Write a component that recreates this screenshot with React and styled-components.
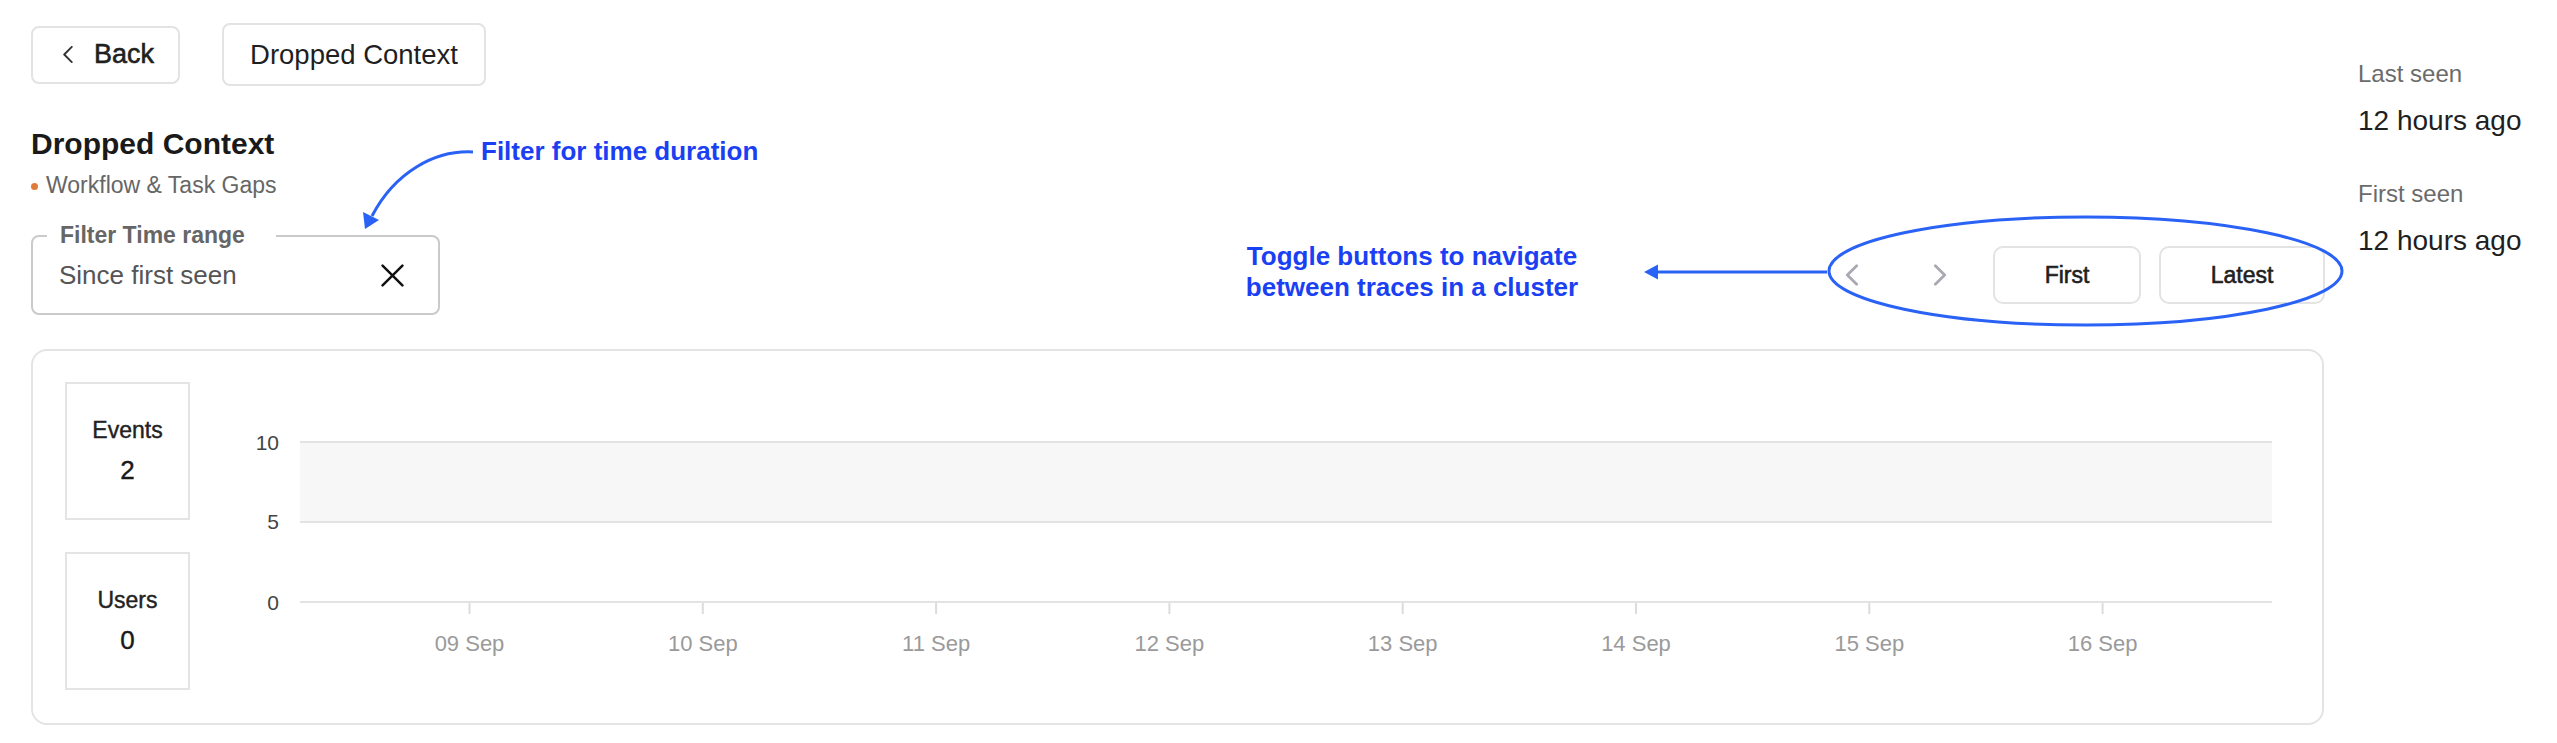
import React from "react";
import styled, { createGlobalStyle } from "styled-components";

const GlobalStyle = createGlobalStyle`
  html, body { margin: 0; padding: 0; background: #fff; }
  body { font-family: "Liberation Sans", Arial, sans-serif; color: #1f1f1f; }
  * { box-sizing: border-box; }
`;

const Page = styled.div`
  display: flex;
  align-items: flex-start;
  width: 2557px;
`;

const Main = styled.div`
  position: relative;
  flex: 0 0 2325px;
  padding: 23px 0 0 31px;
`;

const TopBar = styled.div`
  display: flex;
  align-items: center;
  gap: 42px;
  height: 63px;
`;

// $medium fakes a medium weight on top of the regular face
const OutlineButton = styled.button`
  display: flex;
  align-items: center;
  justify-content: ${(p) => (p.$start ? "flex-start" : "center")};
  gap: 20px;
  width: ${(p) => p.$w}px;
  height: ${(p) => p.$h}px;
  padding: ${(p) => (p.$start ? "0 0 0 29px" : "0")};
  background: #fff;
  border: 2px solid #e3e3e3;
  border-radius: ${(p) => p.$r || 8}px;
  font-family: "Liberation Sans", Arial, sans-serif;
  font-size: ${(p) => p.$fs}px;
  font-weight: 400;
  -webkit-text-stroke: ${(p) => (p.$medium ? "0.6px #1f1f1f" : "0")};
  color: #1f1f1f;
  cursor: pointer;
`;

const Title = styled.h1`
  margin: 40px 0 0;
  font-size: 30px;
  line-height: 36px;
  font-weight: 700;
  color: #1a1a1a;
`;

const Category = styled.div`
  display: flex;
  align-items: center;
  gap: 8px;
  margin-top: 9px;
  font-size: 23px;
  line-height: 28px;
  color: #666;
`;

const Dot = styled.span`
  width: 7px;
  height: 7px;
  border-radius: 50%;
  background: #e07b39;
  margin-top: 2px;
`;

const FilterRow = styled.div`
  display: flex;
  align-items: center;
  justify-content: space-between;
  margin-top: 36px;
  height: 80px;
`;

const FilterBox = styled.div`
  position: relative;
  display: flex;
  align-items: center;
  justify-content: space-between;
  width: 409px;
  height: 80px;
  padding: 0 34px 0 26px;
  border: 2px solid #cacaca;
  border-radius: 8px;
`;

const FilterLegend = styled.span`
  position: absolute;
  top: -16px;
  left: 14px;
  padding: 0 31px 0 13px;
  background: #fff;
  font-size: 23px;
  line-height: 28px;
  font-weight: 700;
  color: #666;
`;

const FilterValue = styled.span`
  font-size: 26px;
  color: #555;
`;

const NavGroup = styled.div`
  display: flex;
  align-items: center;
  gap: 18px;
`;

const IconButton = styled.button`
  display: flex;
  align-items: center;
  justify-content: center;
  width: 70px;
  height: 58px;
  padding: 0;
  background: none;
  border: none;
  cursor: pointer;
`;

const Card = styled.section`
  display: flex;
  gap: 40px;
  margin-top: 34px;
  width: 2293px;
  height: 376px;
  padding: 31px 50px 0 32px;
  border: 2px solid #e4e4e4;
  border-radius: 16px;
`;

const StatColumn = styled.div`
  display: flex;
  flex-direction: column;
  gap: 32px;
  width: 125px;
  flex-shrink: 0;
`;

const StatBox = styled.div`
  display: flex;
  flex-direction: column;
  align-items: center;
  justify-content: center;
  gap: 12px;
  height: 138px;
  border: 2px solid #e4e4e4;
`;

const StatLabel = styled.div`
  font-size: 23px;
  line-height: 26px;
  color: #222;
  -webkit-text-stroke: 0.4px #222;
`;

const StatValue = styled.div`
  font-size: 26px;
  line-height: 30px;
  color: #1a1a1a;
  -webkit-text-stroke: 0.4px #1a1a1a;
`;

const Side = styled.aside`
  display: flex;
  flex-direction: column;
  gap: 40px;
  padding: 59px 0 0 33px;
`;

const Meta = styled.div`
  display: flex;
  flex-direction: column;
  gap: 14px;
`;

const MetaLabel = styled.div`
  font-size: 24px;
  line-height: 30px;
  color: #6b6b6b;
`;

const MetaValue = styled.div`
  font-size: 28px;
  line-height: 36px;
  color: #1f1f1f;
  white-space: nowrap;
`;

/* annotation overlays drawn on top of the screenshot */
const Note = styled.div`
  position: absolute;
  left: ${(p) => p.$x}px;
  top: ${(p) => p.$y}px;
  width: ${(p) => p.$w}px;
  font-family: "Liberation Sans", Arial, sans-serif;
  font-size: 26px;
  line-height: 31px;
  font-weight: 700;
  color: #1b3ff2;
  text-align: ${(p) => p.$align || "center"};
  white-space: nowrap;
`;

const Mark = styled.svg`
  position: absolute;
  left: ${(p) => p.$x}px;
  top: ${(p) => p.$y}px;
  overflow: visible;
  pointer-events: none;
`;

const ChevronLeft = ({ color = "#333", w = 12, h = 17, sw = 2 }) => (
  <svg width={w} height={h} viewBox="0 0 12 18" fill="none">
    <polyline points="10,1 2,9 10,17" stroke={color} strokeWidth={sw} strokeLinecap="round" strokeLinejoin="round" />
  </svg>
);

const ChevronRight = ({ color = "#333", w = 12, h = 17, sw = 2 }) => (
  <svg width={w} height={h} viewBox="0 0 12 18" fill="none">
    <polyline points="2,1 10,9 2,17" stroke={color} strokeWidth={sw} strokeLinecap="round" strokeLinejoin="round" />
  </svg>
);

const CloseIcon = () => (
  <svg width="23" height="23" viewBox="0 0 22 22" fill="none">
    <path d="M1.5 1.5 L20.5 20.5 M20.5 1.5 L1.5 20.5" stroke="#111" strokeWidth="2.4" strokeLinecap="round" />
  </svg>
);

const dates = ["09 Sep", "10 Sep", "11 Sep", "12 Sep", "13 Sep", "14 Sep", "15 Sep", "16 Sep"];

const Chart = () => {
  const W = 2042;
  const left = 70;
  return (
    <svg width={W} height={309} style={{ flexShrink: 0 }}>
      <rect x={left} y={60} width={W - left} height={80} fill="#f7f7f7" />
      {[60, 140, 220].map((y) => (
        <line key={y} x1={left} x2={W} y1={y} y2={y} stroke="#e3e3e3" strokeWidth="2" />
      ))}
      <g fontFamily="Liberation Sans, Arial, sans-serif" fontSize="21" fill="#444" textAnchor="end">
        <text x="49" y="68">10</text>
        <text x="49" y="147">5</text>
        <text x="49" y="228">0</text>
      </g>
      {dates.map((d, i) => {
        const x = 239.5 + i * 233.3;
        return (
          <g key={d}>
            <line x1={x} x2={x} y1={221} y2={232} stroke="#dcdcdc" strokeWidth="2" />
            <text x={x} y="269" textAnchor="middle" fontFamily="Liberation Sans, Arial, sans-serif" fontSize="22" fill="#9a9a9a">
              {d}
            </text>
          </g>
        );
      })}
    </svg>
  );
};

export default function App() {
  return (
    <>
      <GlobalStyle />
      <Page>
        <Main>
          <TopBar>
            <OutlineButton $w={149} $h={58} $fs={27} $medium $start>
              <ChevronLeft />
              Back
            </OutlineButton>
            <OutlineButton $w={264} $h={63} $fs={27.5}>
              Dropped Context
            </OutlineButton>
          </TopBar>

          <Title>Dropped Context</Title>
          <Category>
            <Dot />
            Workflow &amp; Task Gaps
          </Category>

          <FilterRow>
            <FilterBox>
              <FilterLegend>Filter Time range</FilterLegend>
              <FilterValue>Since first seen</FilterValue>
              <CloseIcon />
            </FilterBox>
            <NavGroup>
              <IconButton>
                <ChevronLeft color="#a9a9b3" w={14} h={22} sw={2.4} />
              </IconButton>
              <IconButton>
                <ChevronRight color="#a9a9b3" w={14} h={22} sw={2.4} />
              </IconButton>
              <OutlineButton $w={148} $h={58} $fs={23} $medium $r={10}>
                First
              </OutlineButton>
              <OutlineButton $w={166} $h={58} $fs={23} $medium $r={10}>
                Latest
              </OutlineButton>
            </NavGroup>
          </FilterRow>

          <Card>
            <StatColumn>
              <StatBox>
                <StatLabel>Events</StatLabel>
                <StatValue>2</StatValue>
              </StatBox>
              <StatBox>
                <StatLabel>Users</StatLabel>
                <StatValue>0</StatValue>
              </StatBox>
            </StatColumn>
            <Chart />
          </Card>

          <Note $x={481} $y={136} $w={280} $align="left">
            Filter for time duration
          </Note>
          <Mark $x={355} $y={140} width="130" height="100">
            <path d="M118 12 C 80 10, 40 32, 17 76" stroke="#2a62f5" strokeWidth="3" fill="none" />
            <polygon points="10,89 8,72 24,80" fill="#2a62f5" />
          </Mark>

          <Note $x={1244} $y={241} $w={336}>
            Toggle buttons to navigate
            <br />
            between traces in a cluster
          </Note>
          <Mark $x={1640} $y={262} width="190" height="20">
            <line x1="187" y1="10" x2="16" y2="10" stroke="#2a62f5" strokeWidth="3" />
            <polygon points="4,10 18,2.5 18,17.5" fill="#2a62f5" />
          </Mark>
          <Mark $x={1826} $y={214} width="520" height="114">
            <ellipse cx="259.5" cy="57" rx="256.5" ry="54" stroke="#2a62f5" strokeWidth="3" fill="none" />
          </Mark>
        </Main>

        <Side>
          <Meta>
            <MetaLabel>Last seen</MetaLabel>
            <MetaValue>12 hours ago</MetaValue>
          </Meta>
          <Meta>
            <MetaLabel>First seen</MetaLabel>
            <MetaValue>12 hours ago</MetaValue>
          </Meta>
        </Side>
      </Page>
    </>
  );
}
